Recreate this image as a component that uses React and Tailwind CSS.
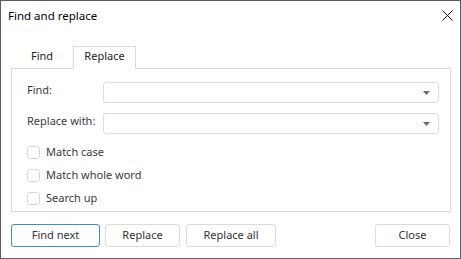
import { useState } from 'react';

function Combo() {
  return (
    <div className="w-[336px] h-[21px] border border-[#dcdcdc] rounded-[3px] bg-white flex items-center justify-end pr-[8px]">
      <svg width="7" height="4" viewBox="0 0 7 4">
        <path d="M0 0 L7 0 L3.5 4 Z" fill="#6b6b6b" />
      </svg>
    </div>
  );
}

function Check({ label }) {
  return (
    <label className="flex items-center h-[23px]">
      <span className="w-[13px] h-[13px] border border-[#d6d6d6] rounded-[3px] bg-white" />
      <span className="ml-[6px] text-[#3a3a3a]">{label}</span>
    </label>
  );
}

function Btn({ children, w, primary }) {
  return (
    <button
      className={`h-[23px] ${w} rounded-[3px] bg-white text-[#333] border ${
        primary ? 'border-[#3d8fd1]' : 'border-[#dcdcdc]'
      }`}
    >
      {children}
    </button>
  );
}

export default function App() {
  const [tab] = useState('replace');

  return (
    <div
      className="w-[461px] h-[259px] bg-white border border-[#5c5c5c] flex flex-col text-[11px] text-[#333]"
      style={{ fontFamily: '"Noto Sans", sans-serif' }}
    >
      {/* Title bar */}
      <div className="h-[29px] flex items-center justify-between pl-[7px] pr-[7px]">
        <span className="text-[11.5px] text-black">Find and replace</span>
        <svg width="11" height="11" viewBox="0 0 11 11">
          <path d="M0.5 0.5 L10.5 10.5 M10.5 0.5 L0.5 10.5" stroke="#111" strokeWidth="1" />
        </svg>
      </div>

      {/* Tabs */}
      <div className="mt-[16px] ml-[10px] flex h-[22px] relative z-10">
        <div className="w-[62px] flex items-center justify-center pb-[2px] text-[#222]">Find</div>
        <div className="w-[63px] h-[23px] border border-b-0 border-[#dadada] bg-white flex items-center justify-center pb-[3px] text-[#222]">
          Replace
        </div>
      </div>

      {/* Panel */}
      <div className="ml-[10px] w-[440px] h-[144px] border border-[#dadada] pt-[13px] pl-[15px] pr-[11px]">
        <div className="flex items-center justify-between">
          <span className="-mt-[4px] text-[#3a3a3a]">Find:</span>
          <Combo />
        </div>
        <div className="flex items-center justify-between mt-[10px]">
          <span className="-mt-[4px] text-[#3a3a3a]">Replace with:</span>
          <Combo />
        </div>
        <div className="mt-[7px] flex flex-col">
          <Check label="Match case" />
          <Check label="Match whole word" />
          <Check label="Search up" />
        </div>
      </div>

      {/* Buttons */}
      <div className="mt-[12px] ml-[10px] mr-[10px] flex">
        <Btn w="w-[89px]" primary>Find next</Btn>
        <div className="ml-[5px]">
          <Btn w="w-[75px]">Replace</Btn>
        </div>
        <div className="ml-[6px]">
          <Btn w="w-[90px]">Replace all</Btn>
        </div>
        <div className="ml-auto">
          <Btn w="w-[75px]">Close</Btn>
        </div>
      </div>
    </div>
  );
}
